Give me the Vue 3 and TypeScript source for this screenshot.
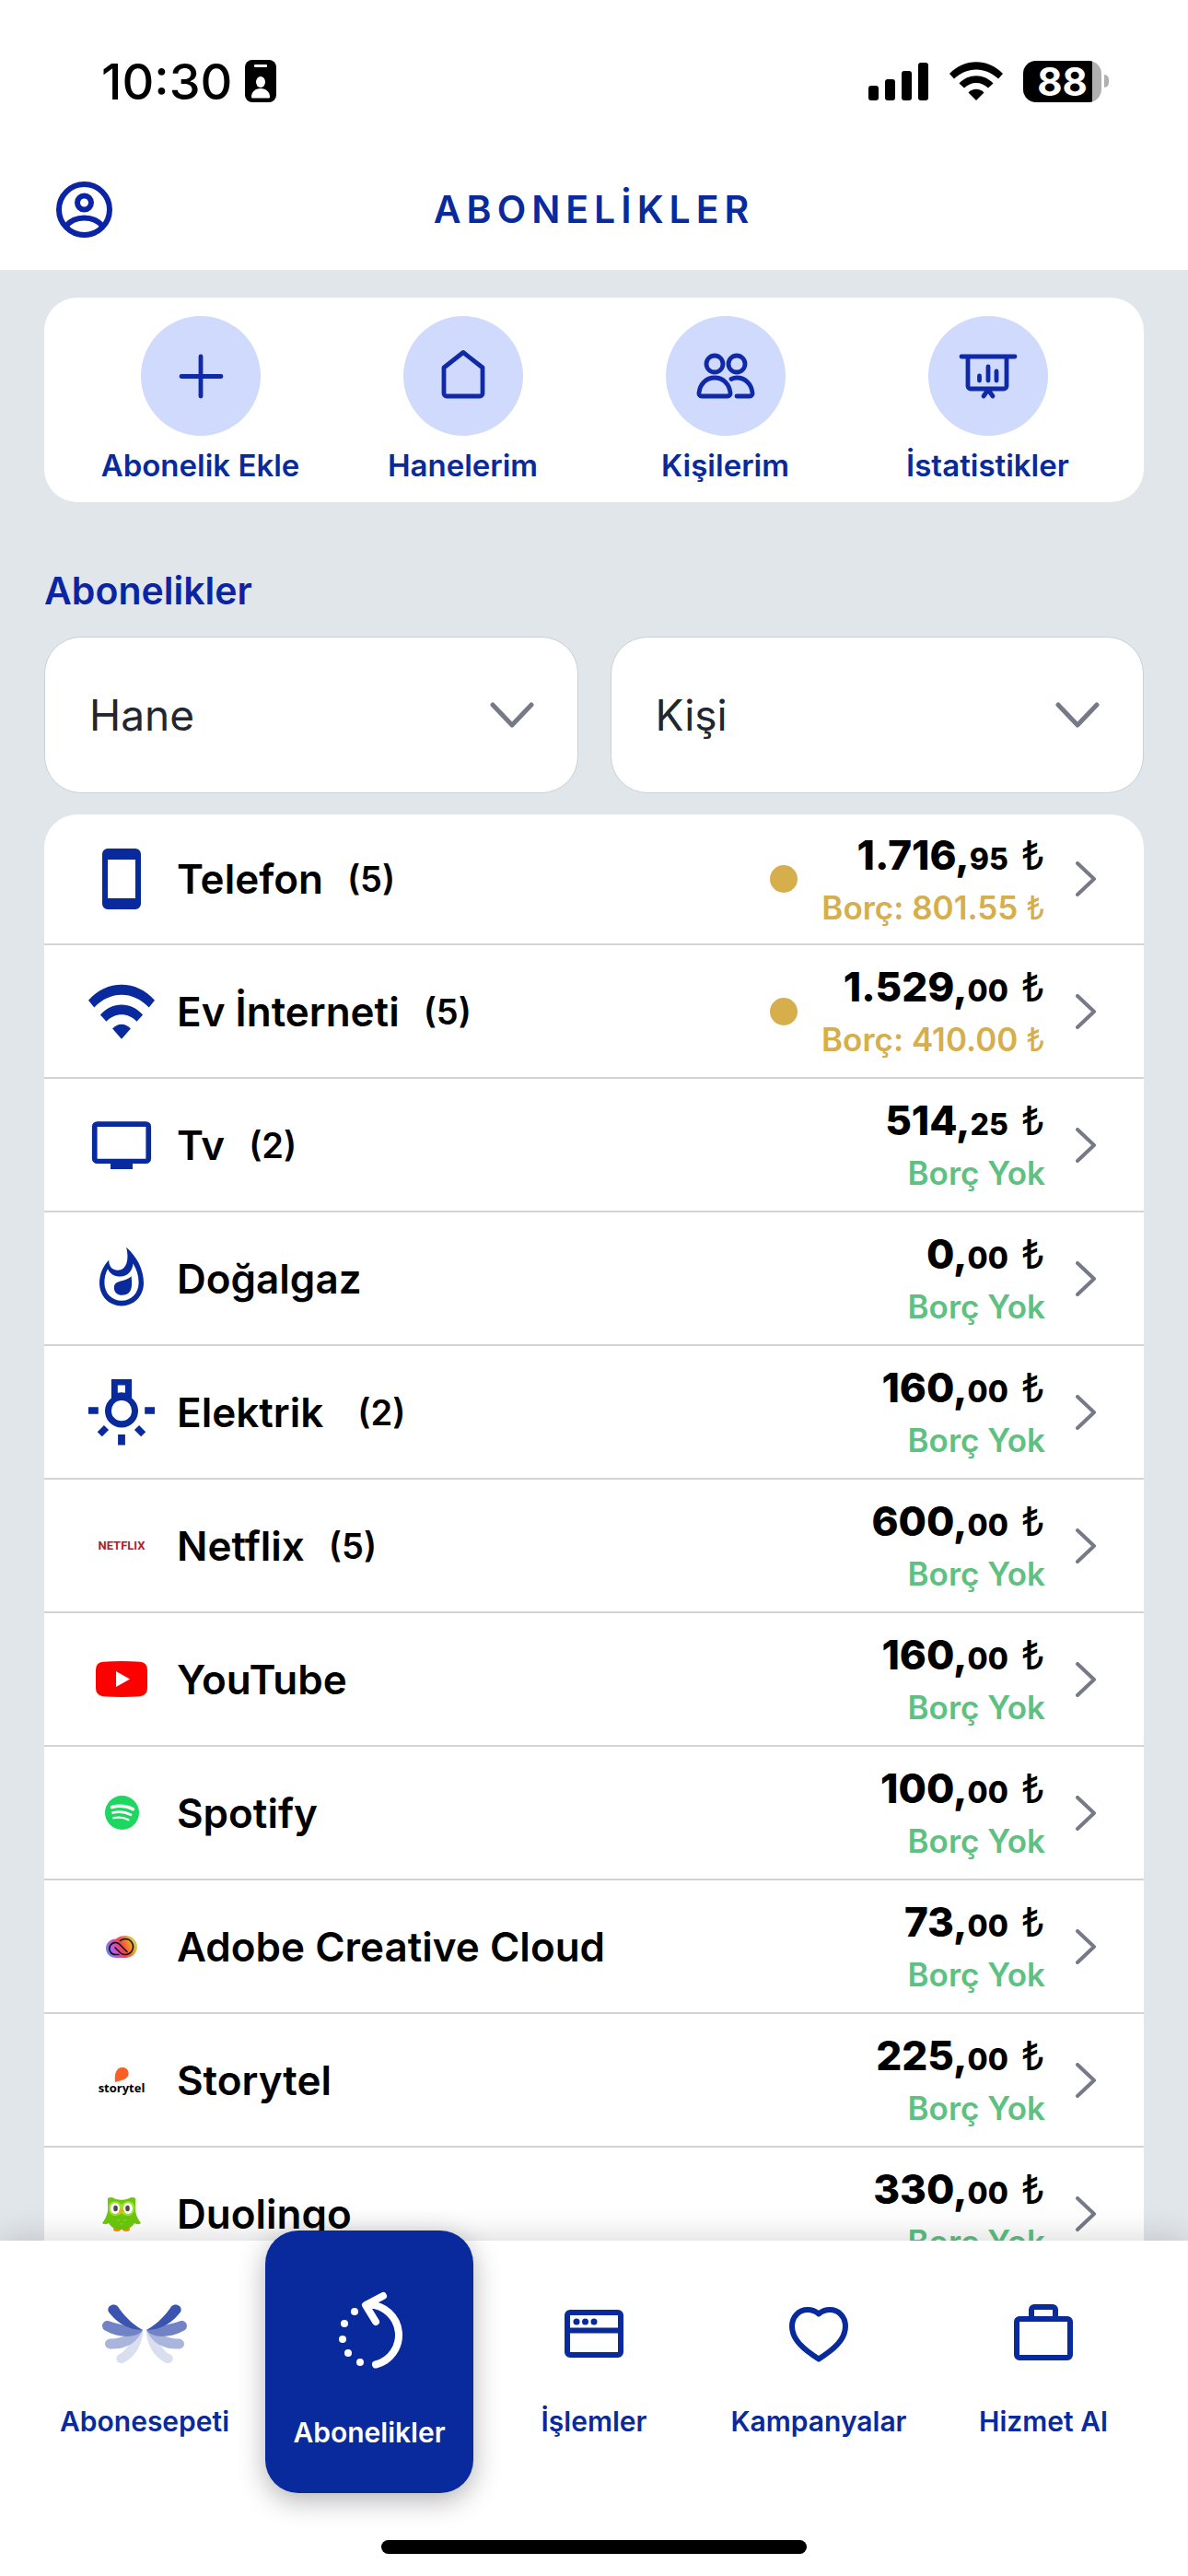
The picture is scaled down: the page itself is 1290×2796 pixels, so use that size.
<script setup lang="ts">
import { ref } from 'vue'

interface Row {
  icon: string
  name: string
  count?: number
  whole: string
  cents: string
  debt?: string
}

const actions = [
  { icon: 'plus', label: 'Abonelik Ekle' },
  { icon: 'home', label: 'Hanelerim' },
  { icon: 'people', label: 'Kişilerim' },
  { icon: 'chart', label: 'İstatistikler' },
]

const filters = [
  { id: 'hane', label: 'Hane' },
  { id: 'kisi', label: 'Kişi' },
]

const rows: Row[] = [
  { icon: 'phone', name: 'Telefon', count: 5, whole: '1.716', cents: '95', debt: '801.55' },
  { icon: 'wifi', name: 'Ev İnterneti', count: 5, whole: '1.529', cents: '00', debt: '410.00' },
  { icon: 'tv', name: 'Tv', count: 2, whole: '514', cents: '25' },
  { icon: 'flame', name: 'Doğalgaz', whole: '0', cents: '00' },
  { icon: 'bulb', name: 'Elektrik ', count: 2, whole: '160', cents: '00' },
  { icon: 'netflix', name: 'Netflix', count: 5, whole: '600', cents: '00' },
  { icon: 'youtube', name: 'YouTube', whole: '160', cents: '00' },
  { icon: 'spotify', name: 'Spotify', whole: '100', cents: '00' },
  { icon: 'adobe', name: 'Adobe Creative Cloud', whole: '73', cents: '00' },
  { icon: 'storytel', name: 'Storytel', whole: '225', cents: '00' },
  { icon: 'duolingo', name: 'Duolingo', whole: '330', cents: '00' },
]

const tabs = ['Abonesepeti', 'Abonelikler', 'İşlemler', 'Kampanyalar', 'Hizmet Al']
const activeTab = ref('Abonelikler')
</script>

<template>
  <div class="app">
    <div class="status">
      <div class="status-left">
        <span class="time">10:30</span>
        <svg width="34" height="46" viewBox="0 0 34 46">
          <rect width="34" height="46" rx="8" />
          <rect x="10" y="5" width="14" height="3" rx="1" fill="#fff" />
          <ellipse cx="17" cy="24" rx="5" ry="6" fill="#fff" />
          <path d="M7 40c0-5 4-9 10-9s10 4 10 9c0 1-.5 1.500-1.500 1.500h-17C7.500 41.500 7 41 7 40z" fill="#fff" />
        </svg>
      </div>
      <div class="status-right">
        <svg width="66" height="41" viewBox="0 0 66 41">
          <rect y="25" width="11" height="16" rx="3" />
          <rect x="18" y="18" width="11" height="23" rx="3" />
          <rect x="36" y="9" width="11" height="32" rx="3" />
          <rect x="54" width="11" height="41" rx="3" />
        </svg>
        <svg width="58" height="42" viewBox="0 0 58 42">
          <path d="M0 13C16-4 42-4 58 13l-5 5.500C39 5 19 5 5 18.500z" />
          <path d="M10.500 23.500c10-11 27-11 37 0L42 28.500c-7-7.500-19-7.500-26 0z" />
          <path d="M20.500 33.500c4.500-5 12.500-5 17 0L29 42z" />
        </svg>
        <div class="battery">
          <span class="battery-level">88</span>
          <span class="battery-cap"></span>
        </div>
      </div>
    </div>

    <header class="header">
      <button class="profile" type="button" aria-label="Profil">
        <svg width="61" height="61" viewBox="0 0 61 61" fill="none" stroke="#0a24a3" stroke-width="6">
          <circle cx="30.500" cy="30.500" r="27.500" />
          <circle cx="30.500" cy="23" r="7.500" />
          <path d="M10.500 48.500c4.500-5.500 11.500-9 20-9s15.500 3.500 20 9" />
        </svg>
      </button>
      <h1>ABONELİKLER</h1>
    </header>

    <main class="content">
      <section class="actions">
        <button v-for="a in actions" :key="a.icon" class="action" type="button">
          <span class="action-circle">
            <svg width="66" height="66" viewBox="0 0 66 66" fill="none" stroke="#1029a6" stroke-width="4.800" stroke-linecap="round" stroke-linejoin="round">
              <path v-if="a.icon === 'plus'" d="M33 12v43M12 33.500h43" />
              <path v-else-if="a.icon === 'home'" d="M33 7.500 54 24v28a3 3 0 0 1-3 3H15a3 3 0 0 1-3-3V24z" />
              <g v-else-if="a.icon === 'people'">
                <circle cx="21" cy="20" r="9" />
                <circle cx="45" cy="20" r="9" />
                <path d="M21 35c9.500 0 16 7 17 16.500.2 2-1 3.500-3 3.500H7c-2 0-3.200-1.500-3-3.500C5 42 11.500 35 21 35zM39 36.500c2-1 4-1.500 6-1.500 9.500 0 16 7 17 16.500.2 2-1 3.500-3 3.500H45" />
              </g>
              <path v-else d="M4 12h58M11 12v32a3 3 0 0 0 3 3h36a3 3 0 0 0 3-3V12M23.500 33v5M33 23v15M42 28v10M33 48l-5 7M33 48l5 7" />
            </svg>
          </span>
          <span class="action-label">{{ a.label }}</span>
        </button>
      </section>

      <h2>Abonelikler</h2>

      <div class="filters">
        <div v-for="f in filters" :key="f.id" class="filter">
          <select :id="f.id" :aria-label="f.label">
            <option>{{ f.label }}</option>
          </select>
          <svg width="48" height="28" viewBox="0 0 48 28" fill="none" stroke="#767a87" stroke-width="5" stroke-linecap="round" stroke-linejoin="round">
            <path d="M3 3l21 22L45 3" />
          </svg>
        </div>
      </div>

      <ul class="list">
        <li v-for="r in rows" :key="r.name">
          <a href="#" class="row">
            <span class="row-icon">
              <svg v-if="r.icon === 'phone'" class="util" viewBox="0 0 24 24">
                <path fill-rule="evenodd" d="M7 1h10a2 2 0 0 1 2 2v18a2 2 0 0 1-2 2H7a2 2 0 0 1-2-2V3a2 2 0 0 1 2-2zm0 4v14h10V5z" />
              </svg>
              <svg v-else-if="r.icon === 'wifi'" class="util" viewBox="0 0 24 24">
                <path d="M0 7.900C6.700.4 17.300.4 24 7.900l-2.100 2.600C16 4.400 8 4.400 2.100 10.500z" />
                <path d="M4.300 13.200c4.300-4.900 11.100-4.900 15.400 0l-2.200 2.400c-3-3.400-8-3.400-11 0z" />
                <path d="M8.700 18.200c1.900-2.200 4.700-2.200 6.600 0L12 21.900z" />
              </svg>
              <svg v-else-if="r.icon === 'tv'" class="util" viewBox="0 0 24 24">
                <path fill-rule="evenodd" d="M3.200 3.400h17.600a1.900 1.900 0 0 1 1.900 1.900v11.500a1.900 1.900 0 0 1-1.900 1.900H16v2H8v-2H3.200a1.900 1.900 0 0 1-1.900-1.900V5.300a1.900 1.900 0 0 1 1.900-1.900zm0 1.900v11.600h17.600V5.300z" />
              </svg>
              <svg v-else-if="r.icon === 'flame'" class="util" viewBox="0 0 24 24">
                <path fill-rule="evenodd" d="M13.700.6c3.900 3.500 6.300 8 6.300 12.900 0 4.900-3.600 8.300-8 8.300s-8-3.400-8-8.300c0-3.200 1.300-6 3.400-8.300 0 2.300 1.100 3.700 3.300 3.700 2.700 0 4.300-3.200 3-8.300zM16.200 6.500c-.3 2.700-2 4.700-4.700 4.700-2.100 0-3.700-1-4.500-2.800-.8 1.500-1.200 3.200-1.200 5 0 3.800 2.700 6.500 6.200 6.500s6.200-2.700 6.200-6.500c0-2.400-.7-4.700-2-6.900z" />
                <path d="M15.500 11.100c.5 3.700.3 6.800-3.300 6.800-1.700 0-2.900-1-2.900-2.600 0-3.100 3.700-1.800 6.200-4.200z" />
              </svg>
              <svg v-else-if="r.icon === 'bulb'" class="util" viewBox="0 0 24 24">
                <path fill-rule="evenodd" d="M8.300 0h7.400v6.800a6 6 0 1 1-7.400 0zM10.600 2.200v2.700a6 6 0 0 1 2.700 0V2.200zM12 7.700a3.700 3.700 0 1 0 0 7.400 3.700 3.700 0 0 0 0-7.400z" />
                <path d="M0 10.100h3.600v2.500H0zM20.400 10.100H24v2.500h-3.600zM10.700 20h2.600v3.800h-2.600z" />
                <path d="M6.500 17.500l-2.400 2.400M17.500 17.500l2.400 2.400" stroke="#082a9c" stroke-width="2.400" />
              </svg>
              <span v-else-if="r.icon === 'netflix'" class="netflix">NETFLIX</span>
              <svg v-else-if="r.icon === 'youtube'" width="56" height="39" viewBox="0 0 56 39">
                <path d="M8 .8Q28-.8 48 .8q8 .7 8 9v19.500q0 8-8 8.900-20 1.500-40 0-8-.9-8-8.900V9.700q0-8.200 8-8.900z" fill="#f00" />
                <path d="M22 11v17l15-8.500z" fill="#fff" />
              </svg>
              <svg v-else-if="r.icon === 'spotify'" width="37" height="37" viewBox="0 0 37 37" fill="none" stroke="#fff" stroke-linecap="round">
                <circle cx="18.500" cy="18.500" r="18.500" fill="#1ed760" stroke="none" />
                <path d="M7.500 12.500c8-2 16-1.500 23 2.200" stroke-width="3.400" />
                <path d="M8.500 18.500c7-1.800 13.500-1 19.500 2.200" stroke-width="2.800" />
                <path d="M9.500 24.200c6-1.300 11-.7 16 2" stroke-width="2.300" />
              </svg>
              <svg v-else-if="r.icon === 'adobe'" width="34" height="24" viewBox="0 0 34 24">
                <defs>
                  <linearGradient id="cc" x1="0" y1=".7" x2="1" y2=".4">
                    <stop offset="0" stop-color="#5a8cf5" />
                    <stop offset=".25" stop-color="#c058e0" />
                    <stop offset=".5" stop-color="#f0405a" />
                    <stop offset=".75" stop-color="#fa8a20" />
                    <stop offset="1" stop-color="#c8d860" />
                  </linearGradient>
                </defs>
                <path d="M11 3.500C14 1 17 0 21 0c7.500 0 13 5 13 12s-5.500 12-13 12H11C4.500 24 0 19.500 0 13.700 0 7.800 4.500 3.500 11 3.500z" fill="url(#cc)" />
                <path d="M14 20.500h-3.500a6.500 6.500 0 1 1 4.500-11l8 8M15.500 5.500c1.700-1.400 3.500-2 5.500-2a8.500 8.500 0 1 1-5.500 15L10 13" fill="none" stroke="#111" stroke-width="1.600" stroke-linecap="round" />
              </svg>
              <span v-else-if="r.icon === 'storytel'" class="storytel">
                <svg width="16" height="16" viewBox="0 0 16 16"><path d="M1 16C0 7 2 0 9 0c4 0 6.500 2.500 6.500 6.500C15.500 13 8 14 1 16z" fill="#fa5f25" /></svg>
                <span>storytel</span>
              </span>
              <svg v-else width="42" height="38" viewBox="0 0 42 38">
                <ellipse cx="16" cy="35.500" rx="4" ry="2.500" fill="#f49000" />
                <ellipse cx="26" cy="35.500" rx="4" ry="2.500" fill="#f49000" />
                <path d="M6 2c3-2 6-1 8.500.8Q21 4.500 27.500 2.800C30 1 33 0 36 2v14c1 5 3 9 6 13-3 2-5 1-7 0-3 5-8 7-14 7S10 34 7 29c-2 1-4 2-7 0 3-4 5-8 6-13z" fill="#6cc80c" />
                <path d="M7 10c2-6 10-6 14-1 4-5 12-5 14 1 1 6-2 11-7 11-3 0-5-1-7-3-2 2-4 3-7 3-5 0-8-5-7-11z" fill="#a0e030" />
                <ellipse cx="14" cy="13" rx="5" ry="6" fill="#fff" />
                <ellipse cx="28" cy="13" rx="5" ry="6" fill="#fff" />
                <ellipse cx="14.500" cy="13" rx="2.300" ry="3.200" fill="#4b4b4b" />
                <ellipse cx="27.500" cy="13" rx="2.300" ry="3.200" fill="#4b4b4b" />
                <path d="M18 15c2-2 4-2 6 0l-3 4z" fill="#f6b000" />
                <path d="M16 25l1.500 1.500L19 25M23 25l1.500 1.500L26 25M19.500 29l1.500 1.500 1.500-1.500" fill="none" stroke="#9ae02c" />
              </svg>
            </span>
            <span class="row-name">{{ r.name }}</span>
            <span v-if="r.count" class="row-count">({{ r.count }})</span>
            <span class="row-end">
              <span v-if="r.debt" class="dot"></span>
              <span class="sums">
                <span class="total"><b>{{ r.whole }},</b><b class="cents">{{ r.cents }}</b><span class="lira">₺</span></span>
                <span v-if="r.debt" class="owed">Borç: {{ r.debt }} <span class="lira-small">₺</span></span>
                <span v-else class="clear">Borç Yok</span>
              </span>
              <svg width="22" height="38" viewBox="0 0 22 38" fill="none" stroke="#767a87" stroke-width="4" stroke-linecap="round" stroke-linejoin="round">
                <path d="M2 2l18 17L2 36" />
              </svg>
            </span>
          </a>
        </li>
      </ul>
    </main>

    <nav class="tabbar">
      <div class="tabs">
        <a v-for="t in tabs" :key="t" href="#" class="tab" :class="{ active: t === activeTab }" @click.prevent="activeTab = t">
          <span class="tab-icon">
            <svg v-if="t === 'Abonesepeti'" width="92" height="64" viewBox="0 0 92 64">
              <g v-for="side in 2" :key="side" :transform="side === 2 ? 'translate(92 0) scale(-1 1)' : undefined">
                <path d="M44 28C44.500 40 38 57 22 64c-6 1-8.500-5-5-9C26 52 30 40 44 28z" fill="#dadff0" />
                <path d="M44 28C38 42 26 49 9 48.500c-8-.5-8-10.500 0-11C20 38 28 32 44 28z" fill="#aab5dc" />
                <path d="M44 28C40 35 22 39 3 28.500c-6-4-2-11.500 3.500-10.500C16 22 30 23 44 28z" fill="#7183c5" />
                <path d="M44 28C27 28 15 19 7 8.500c-3-6 5-11 10-6C22 10 30 20 44 28z" fill="#3a54b0" />
              </g>
            </svg>
            <svg v-else-if="t === 'Abonelikler'" width="84" height="84" viewBox="0 0 84 84" fill="none" stroke="#fff" stroke-width="8" stroke-linecap="round" stroke-linejoin="round">
              <path d="M57 5 38 15l11 18M42 14.500a33 33 0 0 1 7 65" />
              <g fill="#fff" stroke="none">
                <circle cx="26" cy="22" r="4" />
                <circle cx="15" cy="35" r="4" />
                <circle cx="13" cy="52" r="4" />
                <circle cx="19" cy="67" r="4" />
                <circle cx="32" cy="77" r="4" />
              </g>
            </svg>
            <svg v-else-if="t === 'İşlemler'" width="64" height="64" viewBox="0 0 64 64" fill="none" stroke="#082a9c" stroke-width="6" stroke-linejoin="round">
              <rect x="3" y="9" width="58" height="46" rx="3" />
              <path d="M3 28.500h58" />
              <g fill="#082a9c" stroke="none">
                <circle cx="13" cy="19" r="3.500" />
                <circle cx="22.500" cy="19" r="3.500" />
                <circle cx="32" cy="19" r="3.500" />
              </g>
            </svg>
            <svg v-else-if="t === 'Kampanyalar'" width="64" height="64" viewBox="0 0 64 64" fill="none" stroke="#082a9c" stroke-width="6" stroke-linejoin="round">
              <path d="M32 10.500C28 7 24 6 20 6 10.500 6 3 13.500 3 24c0 15 14 26 29 35.500C47 50 61 39 61 24 61 13.500 53.500 6 44 6c-4 0-8 1-12 4.500z" />
            </svg>
            <svg v-else width="64" height="64" viewBox="0 0 64 64" fill="none" stroke="#082a9c" stroke-width="6" stroke-linejoin="round">
              <rect x="3" y="16" width="58" height="42" rx="3" />
              <path d="M19 16V6a3 3 0 0 1 3-3h20a3 3 0 0 1 3 3v10" />
            </svg>
          </span>
          <span class="tab-label">{{ t }}</span>
        </a>
      </div>
      <div class="home-indicator"></div>
    </nav>
  </div>
</template>

<style>
body {
  margin: 0;
  background: #e1e6ea;
}
</style>

<style scoped>
.app {
  display: flex;
  flex-direction: column;
  height: 100vh;
  overflow: hidden;
  background: #e1e6ea;
  color: #000;
  font-family: Inter, Roboto, sans-serif;
}
* {
  box-sizing: border-box;
}
svg {
  display: block;
  flex: none;
}
button {
  padding: 0;
  border: 0;
  background: none;
  font: inherit;
}
a {
  color: inherit;
  text-decoration: none;
}
.status {
  display: flex;
  flex: none;
  align-items: center;
  justify-content: space-between;
  height: 176px;
  padding: 0 86px 0 110px;
  background: #fff;
}
.status-left,
.status-right {
  display: flex;
  align-items: center;
}
.status-left {
  gap: 14px;
}
.status-right {
  gap: 22px;
}
.time {
  font-size: 54px;
  font-weight: 550;
}
.battery {
  display: flex;
  align-items: center;
  gap: 3px;
}
.battery-level {
  width: 85px;
  border-radius: 14px;
  background: linear-gradient(90deg, #000 75px, #b0b0b0 75px);
  color: #fff;
  font-size: 42px;
  font-weight: 700;
  line-height: 45px;
  text-align: center;
}
.battery-cap {
  width: 5px;
  height: 14px;
  border-radius: 0 6px 6px 0;
  background: #b0b0b0;
}
.header {
  display: grid;
  flex: none;
  grid-template-columns: 1fr auto 1fr;
  align-items: center;
  height: 117px;
  padding: 0 61px 15px;
  background: #fff;
}
.profile {
  justify-self: start;
}
h1 {
  margin: 0;
  color: #082a9c;
  font-size: 41px;
  font-weight: 600;
  letter-spacing: 6px;
}
.content {
  flex: 1;
  min-height: 0;
  padding: 30px 48px 0;
  overflow-y: auto;
  scrollbar-width: none;
}
.actions {
  display: grid;
  grid-template-columns: repeat(4, 1fr);
  padding: 20px 27px;
  border-radius: 36px;
  background: #fff;
}
.action {
  display: flex;
  flex-direction: column;
  align-items: center;
  gap: 12px;
}
.action-circle {
  display: grid;
  place-items: center;
  width: 130px;
  height: 130px;
  border-radius: 50%;
  background: #cfdafc;
}
.action-label {
  color: #082a9c;
  font-size: 33px;
  font-weight: 600;
  line-height: 40px;
}
h2 {
  margin: 71px 0 25px;
  color: #0a24a3;
  font-size: 41px;
  font-weight: 600;
  line-height: 50px;
}
.filters {
  display: grid;
  grid-template-columns: 1fr 1fr;
  gap: 35px;
}
.filter {
  display: grid;
  align-items: center;
}
.filter > * {
  grid-area: 1 / 1;
}
.filter svg {
  justify-self: end;
  margin-right: 48px;
  pointer-events: none;
}
select {
  width: 100%;
  height: 170px;
  padding: 0 48px;
  border: 1px solid #c8d2da;
  border-radius: 40px;
  appearance: none;
  background: #fff;
  color: #22262e;
  font: 400 46px Inter, Roboto, sans-serif;
}
.list {
  margin: 23px 0 0;
  padding: 0;
  border-radius: 36px 36px 0 0;
  background: #fff;
  list-style: none;
}
.row {
  display: flex;
  align-items: center;
  height: 145px;
  padding: 0 52px 0 48px;
  border-bottom: 2px solid #d2d3d6;
}
li:first-child .row {
  height: 142px;
}
.row-icon {
  display: grid;
  flex: none;
  place-items: center;
  width: 72px;
  margin-right: 24px;
}
.util {
  width: 72px;
  height: 72px;
  fill: #082a9c;
}
.netflix {
  color: #b1202a;
  font: 700 13px/20px Roboto, sans-serif;
}
.storytel {
  display: grid;
  justify-items: center;
  font: 700 13px/12px "Open Sans", sans-serif;
}
.row-name {
  font-size: 44px;
  font-weight: 600;
  white-space: pre;
}
.row-count {
  margin-left: 26px;
  font-size: 38px;
  font-weight: 600;
}
.row-end {
  display: flex;
  align-items: center;
  margin-left: auto;
}
.dot {
  width: 30px;
  height: 30px;
  margin-right: 26px;
  border-radius: 50%;
  background: #d6ae4c;
}
.sums {
  display: flex;
  flex-direction: column;
  align-items: flex-end;
  margin-right: 33px;
  font-size: 35px;
  font-weight: 600;
  line-height: 48px;
}
.total {
  font-size: 44px;
  line-height: 56px;
}
b {
  font-weight: 800;
}
.cents {
  font-size: 32px;
}
.lira {
  margin-left: 14px;
  font-weight: 400;
}
.owed {
  color: #d6ae4c;
}
.lira-small {
  font-weight: 400;
}
.clear {
  color: #5ec181;
}
.tabbar {
  position: relative;
  display: flex;
  flex: none;
  flex-direction: column;
  align-items: center;
  height: 364px;
  background: #fff;
  box-shadow: 0 0 36px rgba(0, 0, 0, 0.18);
}
.tabs {
  display: grid;
  grid-template-columns: repeat(5, 1fr);
  align-items: start;
  width: 100%;
  padding: 0 35px;
}
.tab {
  display: flex;
  flex-direction: column;
  align-items: center;
  gap: 33px;
  padding-top: 59px;
  color: #082a9c;
}
.tab.active {
  gap: 49px;
  height: 285px;
  margin: -11px 9px 0;
  padding-top: 66px;
  border-radius: 36px;
  background: #082a9c;
  box-shadow: 0 8px 30px rgba(0, 0, 0, 0.3);
  color: #fff;
}
.tab-icon {
  display: grid;
  place-items: center;
  height: 84px;
}
.tab-label {
  font-size: 30px;
  font-weight: 600;
  line-height: 40px;
  white-space: nowrap;
}
.home-indicator {
  width: 462px;
  height: 15px;
  margin: auto 0 24px;
  border-radius: 8px;
  background: #000;
}
</style>
